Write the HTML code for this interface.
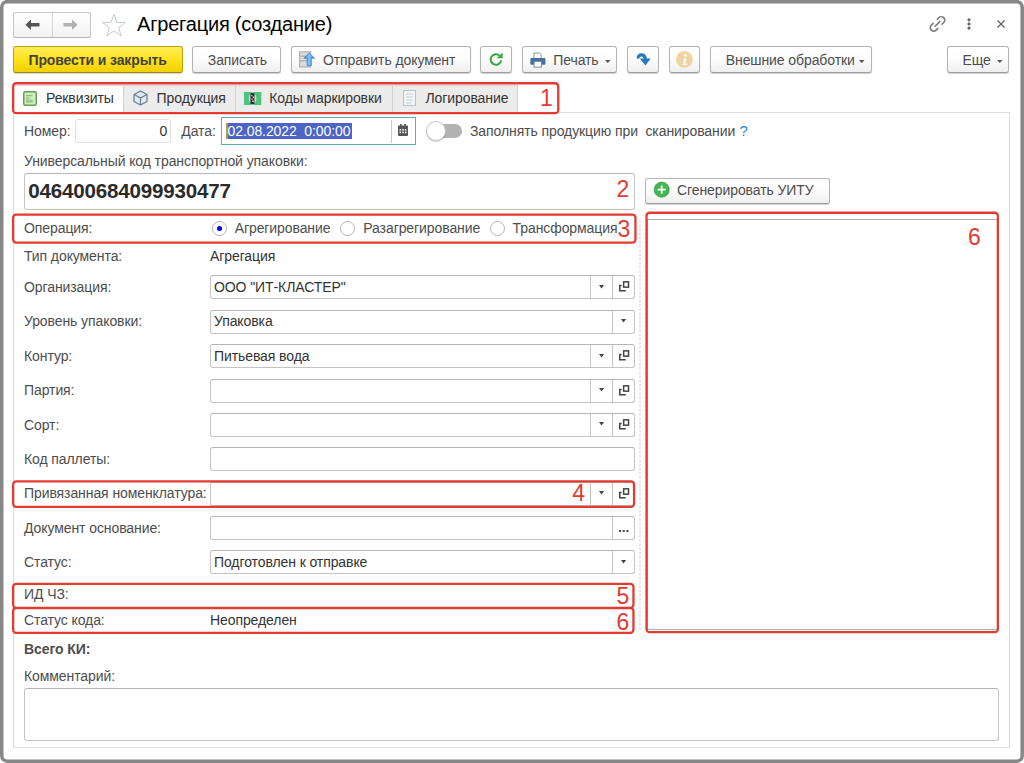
<!DOCTYPE html>
<html><head><meta charset="utf-8">
<style>
*{box-sizing:border-box;margin:0;padding:0}
html,body{width:1024px;height:763px;overflow:hidden;background:#fff}
body{font-family:"Liberation Sans",sans-serif;font-size:13.7px;color:#333;position:relative}
.a{position:absolute}
.t{position:absolute;white-space:nowrap;line-height:1;letter-spacing:-0.09px}
#win{position:absolute;left:0;top:0;width:1024px;height:763px;border:3px solid #888;border-right-width:4px;border-bottom-width:4px;border-radius:6px}
.btn{position:absolute;border:1px solid #b4b4b4;border-bottom-color:#9c9c9c;border-radius:3px;background:linear-gradient(#fff 0%,#fdfdfd 45%,#efefef 100%);box-shadow:0 1px 1px rgba(0,0,0,.18)}
.red{position:absolute;border:2px solid #e33b30;border-radius:4px}
.rn{position:absolute;color:#e33b30;line-height:1;white-space:nowrap}
.inp{position:absolute;border:1px solid #c4c4c4;border-top-color:#b6b6b6;border-radius:3px;background:#fff}
svg.a{overflow:visible}
</style></head><body>
<svg class="a" style="left:0;top:0" width="1024" height="763"><rect x="1.75" y="1.65" width="1020.45" height="759.55" rx="5.5" fill="none" stroke="#878787" stroke-width="3.5"/></svg>

<div class="a" style="left:13px;top:12px;width:78px;height:26px;border:1px solid #c6c6c6;border-bottom-color:#b4b4b4;border-radius:3px;background:linear-gradient(#fff,#f2f2f2)"></div>
<div class="a" style="left:52px;top:13px;width:1px;height:24px;background:#d6d6d6"></div>
<svg class="a" style="left:25px;top:19px" width="15" height="12" viewBox="0 0 15 12"><path d="M0.5 5.7L6 0.5V4.1H14.5V7.4H6V11Z" fill="#555"/></svg>
<svg class="a" style="left:62.5px;top:19px" width="15" height="12" viewBox="0 0 15 12"><path d="M14.5 5.7L9 0.5V4.1H0.5V7.4H9V11Z" fill="#b2b2b2"/></svg>
<svg class="a" style="left:101px;top:13px" width="26" height="24" viewBox="0 0 26 24"><path d="M13 1.2L16 9.4H24.6L17.6 14.6L20.2 23L13 17.8L5.8 23L8.4 14.6L1.4 9.4H10Z" fill="none" stroke="#c5cbd2" stroke-width="1"/></svg>
<div class="t" style="left:137px;top:14.27px;font-size:20px;color:#000;letter-spacing:-0.2px">Агрегация (создание)</div>
<svg class="a" style="left:925px;top:12px" width="26" height="24" viewBox="0 0 26 24"><g transform="translate(12.5 11.9) rotate(45) scale(1.1)" fill="none" stroke="#7a7a7a" stroke-width="1.45" stroke-linecap="round"><path d="M-3.1 -2.9V-4.9A3.1 3.1 0 0 1 3.1 -4.9V-2.6"/><path d="M-3.1 2.5V4.9A3.1 3.1 0 0 0 3.1 4.9V2.7"/><path d="M0 -3V3"/></g></svg>
<svg class="a" style="left:967px;top:18px" width="4" height="12" viewBox="0 0 4 12"><g fill="#666"><circle cx="2" cy="1.8" r="1.6"/><circle cx="2" cy="5.9" r="1.6"/><circle cx="2" cy="10.1" r="1.6"/></g></svg>
<svg class="a" style="left:997px;top:20px" width="8" height="8" viewBox="0 0 8 8"><path d="M0.5 0.5L7.5 7.5M7.5 0.5L0.5 7.5" stroke="#5a5a5a" stroke-width="1.1"/></svg>
<div class="btn" style="left:13px;top:46px;width:170px;height:27px;border-color:#b9a40a;border-bottom-color:#9a8a08;background:linear-gradient(#ffec5a 0%,#ffe21c 50%,#f2d000 100%)"></div>
<div class="t" style="left:28.5px;top:52.65px;font-size:14px;color:#424242;font-weight:bold;letter-spacing:-0.12px">Провести и закрыть</div>
<div class="btn" style="left:192px;top:46px;width:89px;height:27px;"></div>
<div class="t" style="left:207.8px;top:53.15px;font-size:14px;color:#4d4d4d;">Записать</div>
<div class="btn" style="left:291px;top:46px;width:180px;height:27px;"></div>
<svg class="a" style="left:298px;top:50px" width="18" height="19" viewBox="0 0 18 19"><defs><linearGradient id="ag" x1="0" x2="1"><stop offset="0" stop-color="#3a86cc"/><stop offset="0.5" stop-color="#7cc4f8"/><stop offset="1" stop-color="#3a86cc"/></linearGradient></defs><rect x="1" y="1.2" width="12.3" height="16.4" fill="#b5b5b5"/><path d="M2.3 2.5h9v3h-9zM2.3 7h9v3h-9zM2.3 11.5h9v4.8h-9z" fill="#dcdcdc"/><path d="M11.1 3L16.6 8.3H13.3V15.6H9.1V8.3H5.8Z" fill="url(#ag)" stroke="#3a7fc0" stroke-width="0.7" stroke-linejoin="round"/></svg>
<div class="t" style="left:323px;top:53.15px;font-size:14px;color:#4d4d4d;">Отправить документ</div>
<div class="btn" style="left:480px;top:46px;width:32px;height:27px;"></div>
<svg class="a" style="left:488px;top:52px" width="16" height="15" viewBox="0 0 16 15"><path d="M13.2 8.4A5.3 5.3 0 1 1 11.6 3.6" fill="none" stroke="#35a83a" stroke-width="2"/><path d="M8.6 6.2H14.6V0.6Z" fill="#35a83a"/></svg>
<div class="btn" style="left:522px;top:46px;width:95px;height:27px;"></div>
<svg class="a" style="left:529.5px;top:51.5px" width="16" height="16" viewBox="0 0 16 16"><path d="M3.9 1H9.6L11.1 2.5V6.5H3.9Z" fill="#fff" stroke="#8593a1" stroke-width="1"/><rect x="0.4" y="5.9" width="15" height="6.8" rx="1" fill="#43709f"/><rect x="4.1" y="9.4" width="7.3" height="5.7" fill="#fff" stroke="#75879a" stroke-width="1"/></svg>
<div class="t" style="left:553.25px;top:53.15px;font-size:14px;color:#4d4d4d;">Печать</div>
<svg class="a" style="left:604.8px;top:59.5px" width="6" height="4" viewBox="0 0 6 4"><path d="M0 0H5.5L2.75 3Z" fill="#555"/></svg>
<div class="btn" style="left:627px;top:46px;width:32px;height:27px;"></div>
<svg class="a" style="left:636px;top:52px" width="16" height="15" viewBox="0 0 16 15"><path d="M2.2 5.2C3.5 2 8.8 1.6 9.4 7.2" fill="none" stroke="#2a78bd" stroke-width="3.2" stroke-linecap="round"/><path d="M3.9 6.6H14.7L9.4 13.6Z" fill="#2a78bd"/></svg>
<div class="btn" style="left:669px;top:46px;width:31px;height:27px;"></div>
<svg class="a" style="left:676px;top:51px" width="17" height="17" viewBox="0 0 17 17"><circle cx="8.4" cy="8.5" r="8.4" fill="#f2d3a2"/><circle cx="9.4" cy="4.4" r="1.4" fill="#fff"/><path d="M7.6 7.2H10.4L9.2 13.2H11V14H6.2L6.6 13.2H7.3L8.1 8H7.4Z" fill="#fff"/></svg>
<div class="btn" style="left:710px;top:46px;width:162px;height:27px;"></div>
<div class="t" style="left:725.75px;top:53.15px;font-size:14px;color:#4d4d4d;">Внешние обработки</div>
<svg class="a" style="left:858.8px;top:59.5px" width="6" height="4" viewBox="0 0 6 4"><path d="M0 0H5.5L2.75 3Z" fill="#555"/></svg>
<div class="btn" style="left:947px;top:46px;width:62px;height:27px;"></div>
<div class="t" style="left:962.5px;top:53.15px;font-size:14px;color:#4d4d4d;">Еще</div>
<svg class="a" style="left:996.8px;top:59.5px" width="6" height="4" viewBox="0 0 6 4"><path d="M0 0H5.5L2.75 3Z" fill="#555"/></svg>
<div class="a" style="left:13px;top:112px;width:997px;height:636px;border:1px solid #dcdcdc"></div>
<div class="a" style="left:123.5px;top:85px;width:394.5px;height:27px;background:#ececec;border-top:1px solid #d8d8d8;border-right:1px solid #d0d0d0"></div>
<div class="a" style="left:14px;top:85px;width:110px;height:28px;background:#fff;border-top:1px solid #d8d8d8;border-right:1px solid #d0d0d0"></div>
<div class="a" style="left:235px;top:86px;width:1px;height:26px;background:#d0d0d0"></div>
<div class="a" style="left:392px;top:86px;width:1px;height:26px;background:#d0d0d0"></div>
<svg class="a" style="left:23px;top:91px" width="14" height="15" viewBox="0 0 14 15"><rect x="0.75" y="0.75" width="12.5" height="13.5" rx="1.5" fill="#c8f5b6" stroke="#6c9a5e" stroke-width="1.5"/><path d="M3 4.7h6.5M3 7h3.5" stroke="#7fa276" stroke-width="0.9"/><rect x="3" y="8.5" width="6.8" height="3.2" fill="#a4c29a"/></svg>
<div class="t" style="left:46px;top:90.75px;font-size:14px;color:#333;">Реквизиты</div>
<svg class="a" style="left:132.5px;top:90px" width="15" height="16" viewBox="0 0 15 16"><path d="M7.5 1L14 4.5V11.5L7.5 15L1 11.5V4.5Z" fill="#dfe9f2" stroke="#6a7c8e" stroke-width="1.2" stroke-linejoin="round"/><path d="M1 4.5L7.5 8L14 4.5M7.5 8V15" fill="none" stroke="#6a7c8e" stroke-width="1.2"/></svg>
<div class="t" style="left:156.6px;top:90.75px;font-size:14px;color:#333;">Продукция</div>
<svg class="a" style="left:244.4px;top:91.8px;overflow:hidden" width="17.3" height="13.1" viewBox="0 0 17.3 13.1"><defs><radialGradient id="cg" cx="0.5" cy="0.5" r="0.5"><stop offset="0.5" stop-color="#fff"/><stop offset="1" stop-color="#4cc47c"/></radialGradient></defs><rect width="17.3" height="13.1" fill="#4cc47c"/><ellipse cx="8.6" cy="6.5" rx="4.4" ry="7" fill="url(#cg)"/><rect x="6.4" y="1.1" width="4.1" height="11" fill="#2a2a2a"/><path d="M7.2 3h1.2v1.2h-1.2zM8.8 4.6h1.2v1.4h-1.2zM7.4 6.6h1.4v1.2h-1.4zM8.2 8.6h1.6v1.4h-1.6z" fill="#ddd"/></svg>
<div class="t" style="left:269.2px;top:90.75px;font-size:14px;color:#333;">Коды маркировки</div>
<svg class="a" style="left:403px;top:90px" width="13" height="16" viewBox="0 0 13 16"><rect x="0.5" y="0.5" width="12" height="15" fill="#f4f6f8" stroke="#b9c2cc"/><path d="M3 4h7M3 7h7M3 10h7M3 13h5" stroke="#c8d0d8" stroke-width="1"/></svg>
<div class="t" style="left:425.5px;top:90.75px;font-size:14px;color:#333;">Логирование</div>
<div class="rn" style="left:540px;top:86.6px;font-size:23px">1</div>
<div class="t" style="left:24px;top:123.75px;font-size:14px;color:#4d4d4d;">Номер:</div>
<div class="a" style="left:75px;top:119px;width:96px;height:24px;border:1px solid #e0e0e0;border-radius:3px"></div>
<div class="t" style="left:159.5px;top:123.75px;font-size:14px;color:#333;">0</div>
<div class="t" style="left:181.3px;top:123.75px;font-size:14px;color:#4d4d4d;">Дата:</div>
<div class="a" style="left:221px;top:117px;width:194.5px;height:28px;border:1.5px solid #5aaeb0;background:#fff"></div>
<div class="a" style="left:226px;top:123px;width:126px;height:16px;background:#4b64c6"></div>
<div class="a" style="left:226px;top:123px;width:1.5px;height:16px;background:#b69a3a"></div>
<div class="t" style="left:227.5px;top:123.75px;font-size:14px;color:#fff;">02.08.2022&nbsp;&nbsp;0:00:00</div>
<div class="a" style="left:391px;top:119.5px;width:1px;height:23px;background:#c8c8c8"></div>
<svg class="a" style="left:398px;top:123.5px" width="10" height="12" viewBox="0 0 10 12"><rect x="0" y="1.5" width="10" height="10.5" rx="1" fill="#555"/><rect x="2" y="0" width="1.6" height="3" fill="#555"/><rect x="6.4" y="0" width="1.6" height="3" fill="#555"/><g fill="#fff"><rect x="1.5" y="5" width="1.6" height="1.6"/><rect x="4.2" y="5" width="1.6" height="1.6"/><rect x="6.9" y="5" width="1.6" height="1.6"/><rect x="1.5" y="7.6" width="1.6" height="1.6"/><rect x="4.2" y="7.6" width="1.6" height="1.6"/><rect x="6.9" y="7.6" width="1.6" height="1.6"/></g></svg>
<div class="a" style="left:432px;top:123.8px;width:30px;height:14px;border-radius:7px;background:#b3b3b3"></div>
<div class="a" style="left:426px;top:121px;width:20px;height:20px;border-radius:50%;background:#fff;border:1px solid #c4c4c4;box-shadow:0 1px 1px rgba(0,0,0,.2)"></div>
<div class="t" style="left:470px;top:123.75px;font-size:14px;color:#4d4d4d;">Заполнять продукцию при&nbsp;&nbsp;сканировании</div>
<div class="t" style="left:739.5px;top:122.9px;font-size:15px;color:#2a88cc;">?</div>
<div class="t" style="left:24px;top:153.75px;font-size:14px;color:#4d4d4d;">Универсальный код транспортной упаковки:</div>
<div class="inp" style="left:24px;top:173px;width:611px;height:37px"></div>
<div class="t" style="left:28.2px;top:181.16px;font-size:20.6px;color:#2b2b2b;font-weight:bold;letter-spacing:-0.2px">046400684099930477</div>
<div class="rn" style="left:616.4px;top:177.8px;font-size:23px">2</div>
<div class="btn" style="left:645px;top:177.5px;width:185px;height:26.0px;"></div>
<svg class="a" style="left:653.5px;top:182.3px" width="16" height="16" viewBox="0 0 16 16"><circle cx="7.7" cy="7.7" r="7.6" fill="#47b553" stroke="#2e9c3c" stroke-width=".6"/><path d="M7.7 3.6V11.8M3.6 7.7H11.8" stroke="#fff" stroke-width="1.7"/></svg>
<div class="t" style="left:677px;top:182.95px;font-size:14px;color:#4d4d4d;">Сгенерировать УИТУ</div>
<div class="t" style="left:24px;top:220.75px;font-size:14px;color:#4d4d4d;">Операция:</div>
<div class="a" style="left:211.7px;top:221px;width:15px;height:15px;border-radius:50%;border:1px solid #b4b4b4;background:#fff"></div>
<div class="a" style="left:216.7px;top:226px;width:5px;height:5px;border-radius:50%;background:#0000ee"></div>
<div class="t" style="left:234.7px;top:220.75px;font-size:14px;color:#4d4d4d;">Агрегирование</div>
<div class="a" style="left:340.3px;top:221px;width:15px;height:15px;border-radius:50%;border:1px solid #b4b4b4;background:#fff"></div>
<div class="t" style="left:363.3px;top:220.75px;font-size:14px;color:#4d4d4d;">Разагрегирование</div>
<div class="a" style="left:489.5px;top:221px;width:15px;height:15px;border-radius:50%;border:1px solid #b4b4b4;background:#fff"></div>
<div class="t" style="left:512.6px;top:220.75px;font-size:14px;color:#4d4d4d;">Трансформация</div>
<div class="rn" style="left:617.5px;top:217.6px;font-size:23px">3</div>
<div class="t" style="left:24px;top:249.0px;font-size:14px;color:#4d4d4d;">Тип документа:</div>
<div class="t" style="left:210px;top:249.0px;font-size:14px;color:#333;">Агрегация</div>
<div class="t" style="left:24px;top:280.05px;font-size:14px;color:#4d4d4d;">Организация:</div>
<div class="inp" style="left:210px;top:275.4px;width:425px;height:24.0px"></div>
<div class="a" style="left:612px;top:276.4px;width:1px;height:22.0px;background:#c4c4c4"></div>
<svg class="a" style="left:618.5px;top:281.4px" width="11" height="11" viewBox="0 0 11 11"><rect x="4.65" y="0.85" width="4.9" height="5.3" fill="none" stroke="#444" stroke-width="1.5"/><path d="M2.6 4.6H0.75V9.65H6.8" fill="none" stroke="#444" stroke-width="1.5"/></svg>
<div class="a" style="left:590px;top:276.4px;width:1px;height:22.0px;background:#c4c4c4"></div>
<svg class="a" style="left:598.7px;top:284.8px" width="6" height="4" viewBox="0 0 6 4"><path d="M0 0H5.1L2.55 3.5Z" fill="#444"/></svg>
<div class="t" style="left:214px;top:280.05px;font-size:14px;color:#333;">ООО "ИТ-КЛАСТЕР"</div>
<div class="t" style="left:24px;top:314.43px;font-size:14px;color:#4d4d4d;">Уровень упаковки:</div>
<div class="inp" style="left:210px;top:309.78px;width:425px;height:24.0px"></div>
<div class="a" style="left:612px;top:310.78px;width:1px;height:22.0px;background:#c4c4c4"></div>
<svg class="a" style="left:620.7px;top:319.18px" width="6" height="4" viewBox="0 0 6 4"><path d="M0 0H5.1L2.55 3.5Z" fill="#444"/></svg>
<div class="t" style="left:214px;top:314.43px;font-size:14px;color:#333;">Упаковка</div>
<div class="t" style="left:24px;top:348.81px;font-size:14px;color:#4d4d4d;">Контур:</div>
<div class="inp" style="left:210px;top:344.16px;width:425px;height:24.0px"></div>
<div class="a" style="left:612px;top:345.16px;width:1px;height:22.0px;background:#c4c4c4"></div>
<svg class="a" style="left:618.5px;top:350.16px" width="11" height="11" viewBox="0 0 11 11"><rect x="4.65" y="0.85" width="4.9" height="5.3" fill="none" stroke="#444" stroke-width="1.5"/><path d="M2.6 4.6H0.75V9.65H6.8" fill="none" stroke="#444" stroke-width="1.5"/></svg>
<div class="a" style="left:590px;top:345.16px;width:1px;height:22.0px;background:#c4c4c4"></div>
<svg class="a" style="left:598.7px;top:353.56px" width="6" height="4" viewBox="0 0 6 4"><path d="M0 0H5.1L2.55 3.5Z" fill="#444"/></svg>
<div class="t" style="left:214px;top:348.81px;font-size:14px;color:#333;">Питьевая вода</div>
<div class="t" style="left:24px;top:383.19px;font-size:14px;color:#4d4d4d;">Партия:</div>
<div class="inp" style="left:210px;top:378.54px;width:425px;height:24.0px"></div>
<div class="a" style="left:612px;top:379.54px;width:1px;height:22.0px;background:#c4c4c4"></div>
<svg class="a" style="left:618.5px;top:384.54px" width="11" height="11" viewBox="0 0 11 11"><rect x="4.65" y="0.85" width="4.9" height="5.3" fill="none" stroke="#444" stroke-width="1.5"/><path d="M2.6 4.6H0.75V9.65H6.8" fill="none" stroke="#444" stroke-width="1.5"/></svg>
<div class="a" style="left:590px;top:379.54px;width:1px;height:22.0px;background:#c4c4c4"></div>
<svg class="a" style="left:598.7px;top:387.94px" width="6" height="4" viewBox="0 0 6 4"><path d="M0 0H5.1L2.55 3.5Z" fill="#444"/></svg>
<div class="t" style="left:24px;top:417.57px;font-size:14px;color:#4d4d4d;">Сорт:</div>
<div class="inp" style="left:210px;top:412.92px;width:425px;height:24.0px"></div>
<div class="a" style="left:612px;top:413.92px;width:1px;height:22.0px;background:#c4c4c4"></div>
<svg class="a" style="left:618.5px;top:418.92px" width="11" height="11" viewBox="0 0 11 11"><rect x="4.65" y="0.85" width="4.9" height="5.3" fill="none" stroke="#444" stroke-width="1.5"/><path d="M2.6 4.6H0.75V9.65H6.8" fill="none" stroke="#444" stroke-width="1.5"/></svg>
<div class="a" style="left:590px;top:413.92px;width:1px;height:22.0px;background:#c4c4c4"></div>
<svg class="a" style="left:598.7px;top:422.32px" width="6" height="4" viewBox="0 0 6 4"><path d="M0 0H5.1L2.55 3.5Z" fill="#444"/></svg>
<div class="t" style="left:24px;top:451.95px;font-size:14px;color:#4d4d4d;">Код паллеты:</div>
<div class="inp" style="left:210px;top:447.3px;width:425px;height:24.0px"></div>
<div class="t" style="left:24px;top:486.33px;font-size:14px;color:#4d4d4d;">Привязанная номенклатура:</div>
<div class="inp" style="left:210px;top:481.68px;width:425px;height:24.0px"></div>
<div class="a" style="left:612px;top:482.68px;width:1px;height:22.0px;background:#c4c4c4"></div>
<svg class="a" style="left:618.5px;top:487.68px" width="11" height="11" viewBox="0 0 11 11"><rect x="4.65" y="0.85" width="4.9" height="5.3" fill="none" stroke="#444" stroke-width="1.5"/><path d="M2.6 4.6H0.75V9.65H6.8" fill="none" stroke="#444" stroke-width="1.5"/></svg>
<div class="a" style="left:590px;top:482.68px;width:1px;height:22.0px;background:#c4c4c4"></div>
<svg class="a" style="left:598.7px;top:491.08px" width="6" height="4" viewBox="0 0 6 4"><path d="M0 0H5.1L2.55 3.5Z" fill="#444"/></svg>
<div class="t" style="left:24px;top:520.71px;font-size:14px;color:#4d4d4d;">Документ основание:</div>
<div class="inp" style="left:210px;top:516.06px;width:425px;height:24.0px"></div>
<div class="a" style="left:612px;top:517.06px;width:1px;height:22.0px;background:#c4c4c4"></div>
<svg class="a" style="left:618.5px;top:529.96px" width="10" height="3" viewBox="0 0 10 3"><path d="M0 0h2.1v2h-2.1zM3.7 0h2.1v2h-2.1zM7.4 0h2.1v2h-2.1z" fill="#4a4a4a"/></svg>
<div class="t" style="left:24px;top:555.09px;font-size:14px;color:#4d4d4d;">Статус:</div>
<div class="inp" style="left:210px;top:550.44px;width:425px;height:24.0px"></div>
<div class="a" style="left:612px;top:551.44px;width:1px;height:22.0px;background:#c4c4c4"></div>
<svg class="a" style="left:620.7px;top:559.84px" width="6" height="4" viewBox="0 0 6 4"><path d="M0 0H5.1L2.55 3.5Z" fill="#444"/></svg>
<div class="t" style="left:214px;top:555.09px;font-size:14px;color:#333;">Подготовлен к отправке</div>
<div class="rn" style="left:572.2px;top:482.3px;font-size:23px">4</div>
<div class="t" style="left:24px;top:586.5px;font-size:14px;color:#4d4d4d;">ИД ЧЗ:</div>
<div class="rn" style="left:616.6px;top:584.6px;font-size:23px">5</div>
<div class="t" style="left:24px;top:613.25px;font-size:14px;color:#4d4d4d;">Статус кода:</div>
<div class="t" style="left:210px;top:613.25px;font-size:14px;color:#333;">Неопределен</div>
<div class="rn" style="left:616.4px;top:611.1px;font-size:23px">6</div>
<div class="t" style="left:24px;top:641.75px;font-size:14px;color:#4d4d4d;font-weight:bold;">Всего КИ:</div>
<div class="t" style="left:24px;top:669.25px;font-size:14px;color:#4d4d4d;">Комментарий:</div>
<div class="inp" style="left:24px;top:688px;width:975px;height:53px"></div>
<svg class="a" style="left:639px;top:219.7px" width="2" height="411" viewBox="0 0 2 411"><path d="M1 0V410" stroke="#e0e0e0" stroke-width="1.5" stroke-dasharray="2.6 1.6"/></svg>
<div class="a" style="left:647px;top:219px;width:351px;height:411px;border:1px solid #b0b0b0;background:#fff"></div>
<div class="rn" style="left:968px;top:225.9px;font-size:23px">6</div>
<svg class="a" style="left:0;top:0" width="1024" height="763" viewBox="0 0 1024 763"><g fill="none" stroke="#e33b30" stroke-width="2.3"><rect x="13.15" y="83.25" width="545.1" height="29.9" rx="3"/><rect x="13.15" y="214.65" width="622.3" height="27.9" rx="3"/><rect x="13.15" y="481.45" width="620.9" height="25.4" rx="3"/><rect x="13.15" y="583.95" width="620.3" height="23.9" rx="3"/><rect x="13.15" y="608.05" width="620.3" height="24.8" rx="3"/><rect x="646.55" y="212.75" width="351.3" height="419.4" rx="3"/></g></svg>
</body></html>
